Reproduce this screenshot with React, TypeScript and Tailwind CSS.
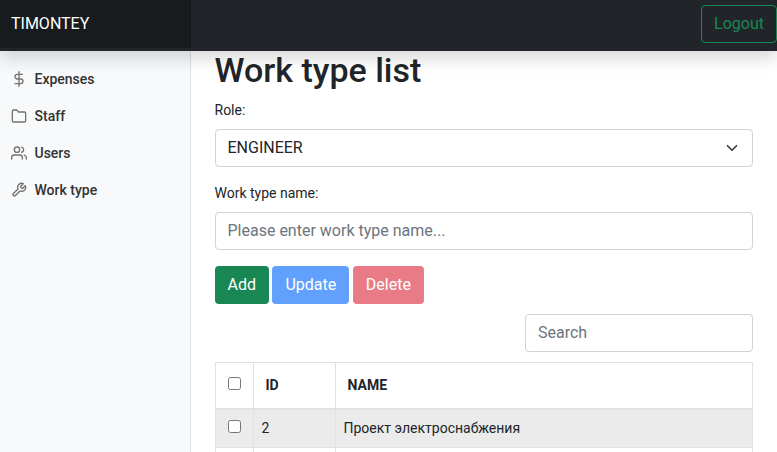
import React from "react";

const icons = {
  dollar: (
    <>
      <line x1="12" y1="1" x2="12" y2="23" />
      <path d="M17 5H9.5a3.5 3.5 0 0 0 0 7h5a3.5 3.5 0 0 1 0 7H6" />
    </>
  ),
  folder: <path d="M22 19a2 2 0 0 1-2 2H4a2 2 0 0 1-2-2V5a2 2 0 0 1 2-2h5l2 3h9a2 2 0 0 1 2 2z" />,
  users: (
    <>
      <path d="M17 21v-2a4 4 0 0 0-4-4H5a4 4 0 0 0-4 4v2" />
      <circle cx="9" cy="7" r="4" />
      <path d="M23 21v-2a4 4 0 0 0-3-3.87" />
      <path d="M16 3.13a4 4 0 0 1 0 7.75" />
    </>
  ),
  tool: (
    <path d="M14.7 6.3a1 1 0 0 0 0 1.4l1.6 1.6a1 1 0 0 0 1.4 0l3.77-3.77a6 6 0 0 1-7.94 7.94l-6.91 6.91a2.12 2.12 0 0 1-3-3l6.91-6.91a6 6 0 0 1 7.94-7.94l-3.76 3.76z" />
  ),
};

function NavItem({ icon, label }: { icon: keyof typeof icons; label: string }) {
  return (
    <a href="#" className="flex h-[37px] items-center gap-[7.5px] pl-[11px] font-medium text-[#333]">
      <svg
        viewBox="0 0 24 24"
        className="mb-px size-4 shrink-0 text-[#727272]"
        fill="none"
        stroke="currentColor"
        strokeWidth="2"
        strokeLinecap="round"
        strokeLinejoin="round"
      >
        {icons[icon]}
      </svg>
      {label}
    </a>
  );
}

const field =
  "block h-[38px] rounded-[4px] border border-[#ced4da] bg-white px-3 text-[16px] leading-6 text-[#212529] placeholder:text-[#6c757d] placeholder:opacity-100 outline-none";
const button = "h-[38px] rounded-[4px] px-[13px] text-[16px] leading-6 text-white";
const cell = "border border-[#dee2e6]";

export default function App() {
  return (
    <div className="flex h-[452px] flex-col overflow-hidden bg-white font-['Roboto','Liberation_Sans',sans-serif] text-[14px] leading-[21px] text-[#212529]">
      <header className="relative z-10 flex h-[51px] shrink-0 items-start justify-between bg-[#212529] shadow-[0_8px_16px_rgba(0,0,0,0.15)]">
        <a
          href="#"
          className="flex h-12 w-[190.5px] items-center bg-black/25 pb-px pl-[11px] text-[16px] leading-6 text-white shadow-[inset_-1px_0_0_rgba(0,0,0,0.25)]"
        >
          TIMONTEY
        </a>
        <button className="mt-[5px] h-[38px] rounded-[4px] border border-[#198754] px-3 text-[16px] leading-6 text-[#198754]">
          Logout
        </button>
      </header>
      <div className="flex min-h-0 flex-1">
        <nav className="w-[190.5px] shrink-0 bg-[#f8f9fa] pt-2.5 shadow-[inset_-1px_0_0_rgba(0,0,0,0.1)]">
          <NavItem icon="dollar" label="Expenses" />
          <NavItem icon="folder" label="Staff" />
          <NavItem icon="users" label="Users" />
          <NavItem icon="tool" label="Work type" />
        </nav>
        <main className="min-w-0 flex-1 px-6">
          <h1 className="mb-2 h-[40.7px] text-[34px] font-medium leading-[38px]">Work type list</h1>
          <label className="mb-2 block">Role:</label>
          <div className={`${field} mb-4 flex items-center justify-between`}>
            <span>ENGINEER</span>
            <svg viewBox="0 0 16 16" className="mt-px mr-0.5 size-3" fill="none" stroke="#343a40" strokeWidth="2.2" strokeLinecap="round" strokeLinejoin="round">
              <path d="M2 5l6 6 6-6" />
            </svg>
          </div>
          <label className="mb-2 block">Work type name:</label>
          <input className={`${field} mb-4 w-full`} placeholder="Please enter work type name..." />
          <div className="flex gap-[3.5px]">
            <button className={`${button} bg-[#198754]`}>Add</button>
            <button className={`${button} bg-[#0d6efd] opacity-65`}>Update</button>
            <button className={`${button} bg-[#dc3545] opacity-65`}>Delete</button>
          </div>
          <div className="my-2.5 flex justify-end">
            <input className={`${field} w-[228px]`} placeholder="Search" />
          </div>
          <table className="w-full table-fixed border-collapse">
            <colgroup>
              <col className="w-[38px]" />
              <col className="w-[82px]" />
              <col />
            </colgroup>
            <thead>
              <tr className="h-[46.5px]">
                <th className={`${cell} border-b-2`}>
                  <input type="checkbox" className="mx-auto mb-[3px] block" />
                </th>
                <th className={`${cell} border-b-2 px-3 text-left font-bold`}>ID</th>
                <th className={`${cell} border-b-2 px-3 text-left font-bold`}>NAME</th>
              </tr>
            </thead>
            <tbody>
              <tr className="h-[39px] bg-[#ebebeb]">
                <td className={cell}>
                  <input type="checkbox" className="mx-auto mb-1 block" />
                </td>
                <td className={`${cell} px-2`}>2</td>
                <td className={`${cell} px-2`}>Проект электроснабжения</td>
              </tr>
              <tr className="h-[38px]">
                <td className={cell} />
                <td className={cell} />
                <td className={cell} />
              </tr>
            </tbody>
          </table>
        </main>
      </div>
    </div>
  );
}
